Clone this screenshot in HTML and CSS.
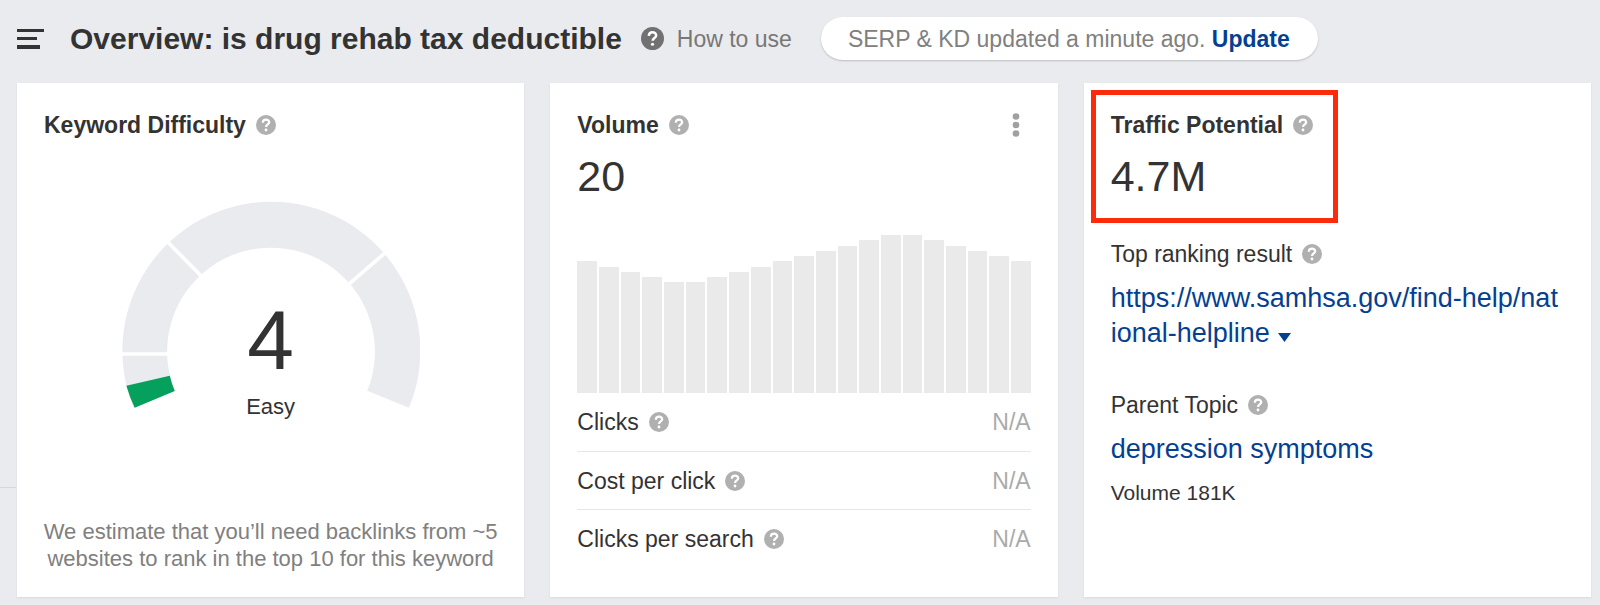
FILE: index.html
```html
<!DOCTYPE html>
<html lang="en">
<head>
<meta charset="utf-8">
<title>Overview: is drug rehab tax deductible</title>
<link rel="stylesheet" href="styles.css">
</head>
<body>
<svg class="sprite" aria-hidden="true">
  <symbol id="help" viewBox="0 0 20 20">
    <circle cx="10" cy="10" r="10" fill="currentColor"/>
    <path class="help-mark" d="M6.8 7.7C6.9 5.6 8.2 4.6 10 4.6c1.9 0 3.2 1 3.2 2.7 0 2.2-3.1 2.2-3.1 4.6"/>
    <circle class="help-dot" cx="10" cy="15" r="1.4"/>
  </symbol>
</svg>

<header class="topbar">
  <button class="icon-button menu" aria-label="Menu">
    <svg width="27" height="20" viewBox="0 0 27 20"><path fill="currentColor" d="M0 0h27v3H0zM0 8h20v3H0zM0 16h23v4H0z"/></svg>
  </button>
  <h1 class="title">Overview: is drug rehab tax deductible</h1>
  <a class="howto" href="#"><svg class="help-large" aria-hidden="true"><use href="#help"/></svg>How to use</a>
  <p class="status">SERP &amp; KD updated a minute ago. <a class="update" href="#">Update</a></p>
</header>

<main class="cards">
  <section class="card">
    <div class="heading"><h2 class="name">Keyword Difficulty</h2><button class="icon-button" aria-label="About Keyword Difficulty"><svg class="help"><use href="#help"/></svg></button></div>
    <div class="gauge">
      <svg class="dial" viewBox="66 65 892 620" aria-hidden="true">
        <path class="track" d="M101 684A446 446 0 1 1 925 684L800 633A311 311 0 1 0 224 633Z"/>
        <path class="level" d="M104 684A446 446 0 0 1 79 618L209 588A311 311 0 0 0 224 634Z"/>
        <path class="split" d="M60 523H210M201 186L302 288M855 219L746 313"/>
      </svg>
      <div class="score"><span class="score-value">4</span><span class="score-label">Easy</span></div>
    </div>
    <p class="note">We estimate that you’ll need backlinks from ~5 websites to rank in the top 10 for this keyword</p>
  </section>

  <section class="card">
    <div class="heading"><h2 class="name">Volume</h2><button class="icon-button" aria-label="About Volume"><svg class="help"><use href="#help"/></svg></button>
      <button class="icon-button more" aria-label="More options"><svg width="8" height="24" viewBox="0 0 8 24"><g fill="currentColor"><circle cx="4" cy="3.5" r="3.3"/><circle cx="4" cy="12" r="3.3"/><circle cx="4" cy="20.5" r="3.3"/></g></svg></button>
    </div>
    <p class="figure">20</p>
    <div class="chart" role="img" aria-label="Monthly volume">
      <i class="bar" style="height:83.3%"></i><i class="bar" style="height:80%"></i><i class="bar" style="height:76.7%"></i><i class="bar" style="height:73.3%"></i><i class="bar" style="height:70%"></i><i class="bar" style="height:70%"></i><i class="bar" style="height:73.3%"></i><i class="bar" style="height:76.7%"></i><i class="bar" style="height:80%"></i><i class="bar" style="height:83.3%"></i><i class="bar" style="height:86.7%"></i><i class="bar" style="height:90%"></i><i class="bar" style="height:93.3%"></i><i class="bar" style="height:96.7%"></i><i class="bar" style="height:100%"></i><i class="bar" style="height:100%"></i><i class="bar" style="height:96.7%"></i><i class="bar" style="height:93.3%"></i><i class="bar" style="height:90%"></i><i class="bar" style="height:86.7%"></i><i class="bar" style="height:83.3%"></i>
    </div>
    <dl class="metrics">
      <div class="metric"><dt class="label">Clicks<button class="icon-button" aria-label="About Clicks"><svg class="help"><use href="#help"/></svg></button></dt><dd class="value">N/A</dd></div>
      <div class="metric"><dt class="label">Cost per click<button class="icon-button" aria-label="About Cost per click"><svg class="help"><use href="#help"/></svg></button></dt><dd class="value">N/A</dd></div>
      <div class="metric"><dt class="label">Clicks per search<button class="icon-button" aria-label="About Clicks per search"><svg class="help"><use href="#help"/></svg></button></dt><dd class="value">N/A</dd></div>
    </dl>
  </section>

  <section class="card">
    <div class="highlight">
      <div class="heading"><h2 class="name">Traffic Potential</h2><button class="icon-button" aria-label="About Traffic Potential"><svg class="help"><use href="#help"/></svg></button></div>
      <p class="figure">4.7M</p>
    </div>
    <h3 class="label sub">Top ranking result<button class="icon-button" aria-label="About Top ranking result"><svg class="help"><use href="#help"/></svg></button></h3>
    <p class="result"><a class="link" href="#">https://www.samhsa.gov/find-help/national-helpline</a><button class="icon-button caret" aria-label="Result options"><svg width="13" height="9" viewBox="0 0 13 9"><path fill="currentColor" d="M0 0h13L6.5 9z"/></svg></button></p>
    <h3 class="label sub">Parent Topic<button class="icon-button" aria-label="About Parent Topic"><svg class="help"><use href="#help"/></svg></button></h3>
    <p class="result"><a class="link" href="#">depression symptoms</a></p>
    <p class="topic-volume">Volume 181K</p>
  </section>
</main>
</body>
</html>
```
FILE: styles.css
```css
* { box-sizing: border-box; }

body {
  display: flex;
  flex-direction: column;
  min-height: 100vh;
  margin: 0;
  background: #eaebee;
  color: #333;
  font: 23px/28px "Liberation Sans", Arial, sans-serif;
}

h1, h2, h3, p, dl, dd { margin: 0; font-weight: normal; }

a { color: #053f92; text-decoration: none; }

.sprite { display: none; }

.icon-button {
  display: flex;
  padding: 0;
  border: 0;
  background: none;
  color: #b0b0b0;
  cursor: pointer;
}

.help { width: 20px; height: 20px; }
.help-large { width: 23px; height: 23px; color: #717171; }
.help-mark { fill: none; stroke: #fff; stroke-width: 2.2; }
.help-dot { fill: #fff; }

.topbar {
  display: flex;
  align-items: center;
  padding: 17px 17px 23px;
}

.menu { color: #333; }

.title {
  margin-left: 26px;
  font-size: 30px;
  line-height: 36px;
  font-weight: bold;
}

.howto {
  display: flex;
  align-items: center;
  gap: 13px;
  margin-left: 19px;
  color: #777;
}

.status {
  margin-left: 29px;
  padding: 8px 28px 7px 27px;
  border-radius: 22px;
  background: #fff;
  box-shadow: 0 1px 2px rgba(0, 0, 0, .2);
  color: #808080;
}

.update { font-weight: bold; }

.cards {
  position: relative;
  flex: 1;
  display: grid;
  grid-template-columns: repeat(3, minmax(0, 1fr));
  gap: 26px;
  padding: 0 9px 8px 17px;
}

/* Divider of the page behind the cards */
.cards::before {
  content: "";
  position: absolute;
  top: 404px;
  left: 0;
  width: 16px;
  height: 1px;
  background: #d6d7da;
}

.card {
  display: flex;
  flex-direction: column;
  padding: 28px 27px 25px;
  background: #fff;
  box-shadow: 0 1px 2px rgba(0, 0, 0, .08);
}

.heading { display: flex; align-items: center; gap: 10px; }
.name { font-size: 23px; font-weight: bold; }
.more { margin: 0 11px 0 auto; color: #a0a0a0; }

.figure {
  margin-top: 13px;
  font-size: 43px;
  line-height: 48px;
}

.gauge {
  display: grid;
  justify-content: center;
  margin-top: 62px;
}

.dial { grid-area: 1 / 1; width: 298px; }
.track { fill: #eaebee; }
.level { fill: #04a05c; }
.split { fill: none; stroke: #fff; stroke-width: 11; }

.score {
  grid-area: 1 / 1;
  display: flex;
  flex-direction: column;
  align-items: center;
  padding-top: 97px;
}

.score-value { font-size: 84px; line-height: 84px; }
.score-label { margin-top: 11px; font-size: 22px; }

.note {
  margin: auto -8px 0;
  color: #808080;
  font-size: 22px;
  line-height: 27px;
  text-align: center;
}

.chart {
  display: flex;
  align-items: flex-end;
  gap: 2px;
  height: 158px;
  margin-top: 35px;
}

.bar { flex: 1; background: #eaeaea; }

.metric {
  display: flex;
  align-items: center;
  justify-content: space-between;
  height: 58px;
}

.metric + .metric { border-top: 1px solid #e6e6e6; }
.label { display: flex; align-items: center; gap: 10px; }
.value { color: #aaa; }

.highlight { position: relative; align-self: flex-start; }

.highlight::after {
  content: "";
  position: absolute;
  inset: -21px -25px -23px -20px;
  border: 5px solid #fb2b0c;
  pointer-events: none;
}

.sub { margin-top: 40px; font-size: 23px; }

.result {
  margin-top: 13px;
  padding-right: 4px;
  font-size: 27px;
  line-height: 35px;
  word-break: break-all;
}

.caret { display: inline-flex; margin-left: 8px; color: #053f92; }
.topic-volume { margin-top: 12px; font-size: 21px; }
```
